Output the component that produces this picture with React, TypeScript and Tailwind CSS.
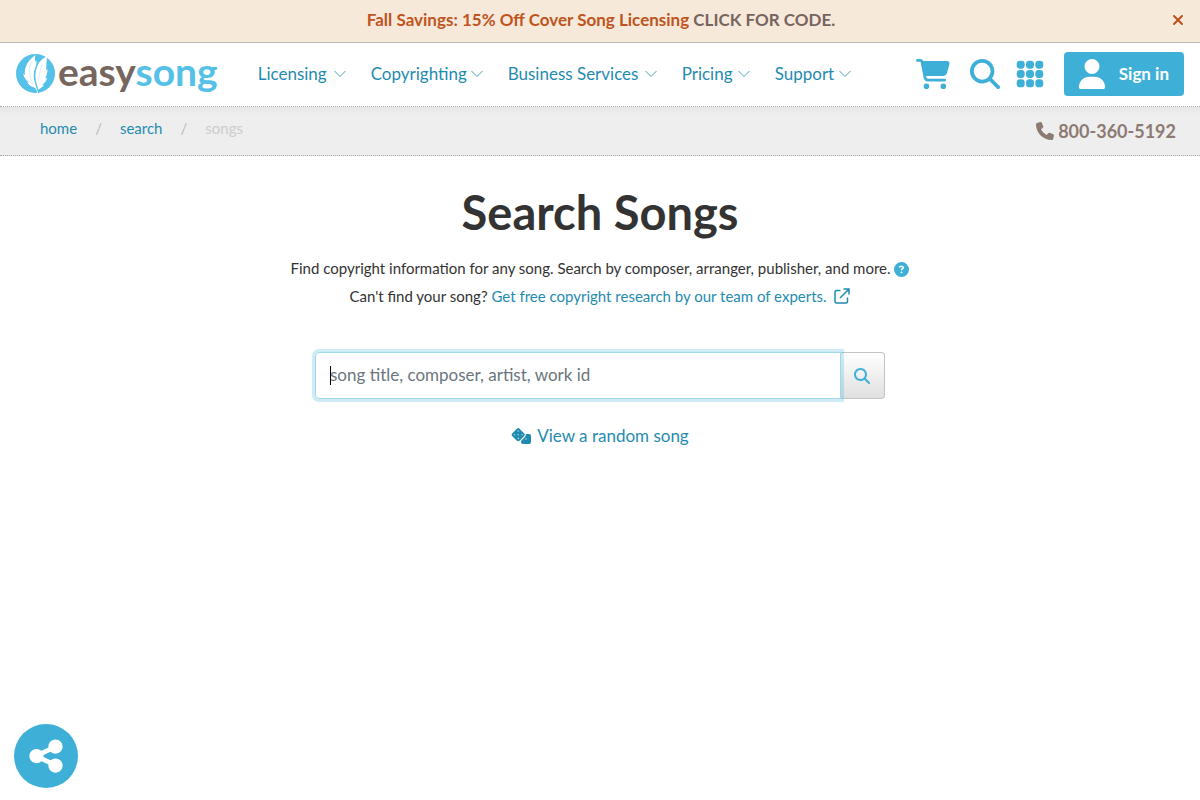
import { FaCartShopping, FaCircleQuestion, FaMagnifyingGlass, FaPhone, FaShareNodes, FaUser, FaXmark } from "react-icons/fa6";

const menu = [
  { label: "Licensing", width: "w-[88px]" },
  { label: "Copyrighting", width: "w-[112px]" },
  { label: "Business Services", width: "w-[149px]" },
  { label: "Pricing", width: "w-[68px]" },
  { label: "Support", width: "w-[76px]" },
];

function Feather() {
  return (
    <svg viewBox="0 0 40 40" className="size-10 shrink-0" aria-hidden="true">
      <circle cx="19.500" cy="19.500" r="19.500" fill="#55c0e8" />
      <path
        d="M22 40C20.500 36 19.500 34 18.500 33.500C16 33.500 13 31 11 28.500L13 28.500C10 26.500 8 23.500 7 19.500L9 21C8 14 11 7 19.500 1C18.500 4 19 6 19.500 8L20.500 6.500C21 10 19.500 13 18.500 16C17.500 20 17.500 25 19 29C20 33 21 36 22.500 39Z"
        fill="#fff"
      />
      <path
        d="M22 36C23.500 34.500 26 34 28 31L26 31C29 29 30.500 26.500 31 23.500L29 24.500C31 21 31.500 18 31.500 15L30 16.500C31 12 29.500 7 32 2C26 4 22 9 20.500 14C18 20 19 27 20.500 31C21.500 34 22 36 22 38Z"
        fill="#fff"
      />
      <path d="M21.500 10C19 16 18 22 20 29C20.800 32 22 36 22.800 39.500" fill="none" stroke="#55c0e8" strokeWidth="0.900" />
      <path d="M15.500 8C12.500 14 13 22 17 30M12 26L16 30M27 9C24 14 24 20 22 27" fill="none" stroke="#55c0e8" strokeWidth="0.400" opacity="0.600" />
    </svg>
  );
}

function Chevron() {
  return (
    <svg viewBox="0 0 12 8" className="h-2 w-3 shrink-0" fill="none" stroke="currentColor" strokeWidth="0.8" aria-hidden="true">
      <path d="M0.500 1L6 6.500L11.500 1" />
    </svg>
  );
}

function Grid() {
  return (
    <svg viewBox="0 0 28 28" className="size-7" fill="currentColor" aria-hidden="true">
      {[4.7, 14, 23.3].map((y) => [4.7, 14, 23.3].map((x) => <rect key={`${x}-${y}`} x={x - 4} y={y - 4} width="8" height="8" rx="3.4" />))}
    </svg>
  );
}

function ExternalLink() {
  return (
    <svg viewBox="0 0 16 16" className="ml-1 inline size-4 align-[-2px]" fill="none" stroke="currentColor" strokeWidth="1.500" aria-hidden="true">
      <path d="M6.500 2.500H2.500Q1 2.500 1 4V13.500Q1 15 2.500 15H12Q13.500 15 13.500 13.500V9.500M9.500 1H15V6.500M15 1L6 10" />
    </svg>
  );
}

function Dice() {
  return (
    <svg viewBox="0 0 20 16" className="h-4 w-5" fill="currentColor" aria-hidden="true">
      <rect x="2" y="1.500" width="10.400" height="10.400" rx="2.200" transform="rotate(45 7.200 6.700)" />
      <path d="M14.800 6H18Q20 6 20 8V14Q20 16 18 16H12Q10 16 10 14V13L14 9Q15 8 14.800 6Z" />
      <g fill="#fff" opacity="0.600">
        <circle cx="7.200" cy="3" r="0.800" />
        <circle cx="3.500" cy="6.700" r="0.800" />
        <circle cx="7.200" cy="6.700" r="0.800" />
        <circle cx="11" cy="6.700" r="0.800" />
        <circle cx="7.200" cy="10.400" r="0.800" />
        <circle cx="15" cy="11" r="0.800" />
      </g>
    </svg>
  );
}

export default function App() {
  return (
    <div className="min-h-screen bg-white font-[Lato,sans-serif] text-[#333]">
      <div className="flex h-[43px] items-center border-b border-[#bbb] bg-[#f6e9da] px-4 pb-0.5">
        <p className="flex-1 pl-4 text-center text-[17px] font-bold text-[#bf5420]">
          Fall Savings: 15% Off Cover Song Licensing{" "}
          <a href="#code" className="text-[#76645e]">CLICK FOR CODE.</a>
        </p>
        <button type="button" aria-label="Close" className="text-[#c0501c]">
          <FaXmark className="-mr-0.5 size-4" />
        </button>
      </div>

      <header className="flex h-16 items-center border-b border-dotted border-[#aaa] px-4 pb-0.5">
        <a href="#home" className="flex items-center gap-0.5" aria-label="easysong">
          <Feather />
          <span className="pb-1.5 text-[39px] leading-10 font-bold text-[#76665f]">
            easy<span className="text-[#55c0e8]">song</span>
          </span>
        </a>
        <nav className="ml-10 flex gap-[25px] text-[#1f8bb0]">
          {menu.map((item) => (
            <a key={item.label} href="#menu" className={`${item.width} flex items-center justify-between text-[17px] whitespace-nowrap`}>
              {item.label}
              <Chevron />
            </a>
          ))}
        </nav>
        <div className="ml-auto flex items-center text-[#3eafd7]">
          <button type="button" aria-label="Cart"><FaCartShopping className="h-[30px] w-[34px]" /></button>
          <button type="button" aria-label="Search" className="ml-5"><FaMagnifyingGlass className="size-[30px]" /></button>
          <button type="button" aria-label="Apps" className="ml-4"><Grid /></button>
          <button type="button" className="ml-5 flex h-11 w-[120px] items-center justify-between rounded bg-[#3eafd7] pr-[15px] pl-3 text-[17px] font-bold text-white">
            <FaUser className="h-[30px] w-8" />
            Sign in
          </button>
        </div>
      </header>

      <div className="flex h-[49px] justify-between border-b border-dotted border-[#aaa] bg-linear-to-b from-[#e6e6e6] to-[#eee] to-15% px-10 pr-6">
        <nav aria-label="Breadcrumb" className="flex gap-[18px] pt-[11px] text-[15px] leading-5 text-[#1f8bb0]">
          <a href="#home">home</a>
          <span className="text-[#bbb]">/</span>
          <a href="#search">search</a>
          <span className="text-[#bbb]">/</span>
          <span className="text-[#ccc]">songs</span>
        </nav>
        <a href="tel:8003605192" className="flex items-center gap-1 text-lg font-bold text-[#8d7a73]">
          <FaPhone className="size-[18px]" />
          800-360-5192
        </a>
      </div>

      <main className="flex flex-col items-center px-4 text-center">
        <h1 className="mt-7 text-[47px] leading-[56px] font-bold">Search Songs</h1>
        <div className="mt-3.5 text-[15px] leading-7">
          <p>
            Find copyright information for any song. Search by composer, arranger, publisher, and more.{" "}
            <FaCircleQuestion className="inline size-[15px] align-[-3px] text-[#3eafd7]" />
          </p>
          <p>
            Can't find your song?{" "}
            <a href="#research" className="text-[#1f8bb0]">
              Get free copyright research by our team of experts. <ExternalLink />
            </a>
          </p>
        </div>
        <form className="mt-[42px] flex h-[47px] w-full max-w-[570px]">
          <div className="relative z-10 flex min-w-0 flex-1">
            <input
              autoFocus
              type="text"
              aria-label="Search songs"
              placeholder="song title, composer, artist, work id"
              className="peer w-full rounded-l border border-[#9fd7eb] px-3.5 pb-0.5 text-[17px] caret-transparent ring-[3px] ring-[#3eafd7]/25 outline-none placeholder:text-[#6c757d] not-placeholder-shown:caret-black"
            />
            <span aria-hidden="true" className="absolute top-3.5 left-[15px] hidden h-[19px] w-px bg-black peer-placeholder-shown:block" />
          </div>
          <button type="button" aria-label="Search" className="flex w-11 items-center justify-center rounded-r border border-l-0 border-[#c3c3c3] bg-linear-to-b from-white to-[#e0e0e0] text-[#3eafd7]">
            <FaMagnifyingGlass className="-ml-0.5 size-4" />
          </button>
        </form>
        <a href="#random" className="mt-6 flex items-center gap-1.5 text-[17px] leading-[26px] text-[#1f8bb0]">
          <Dice />
          View a random song
        </a>
      </main>

      <button type="button" aria-label="Share" className="fixed bottom-3 left-3.5 flex size-16 items-center justify-center rounded-full bg-[#3eafd7] text-white">
        <FaShareNodes className="size-[38px]" />
      </button>
    </div>
  );
}
